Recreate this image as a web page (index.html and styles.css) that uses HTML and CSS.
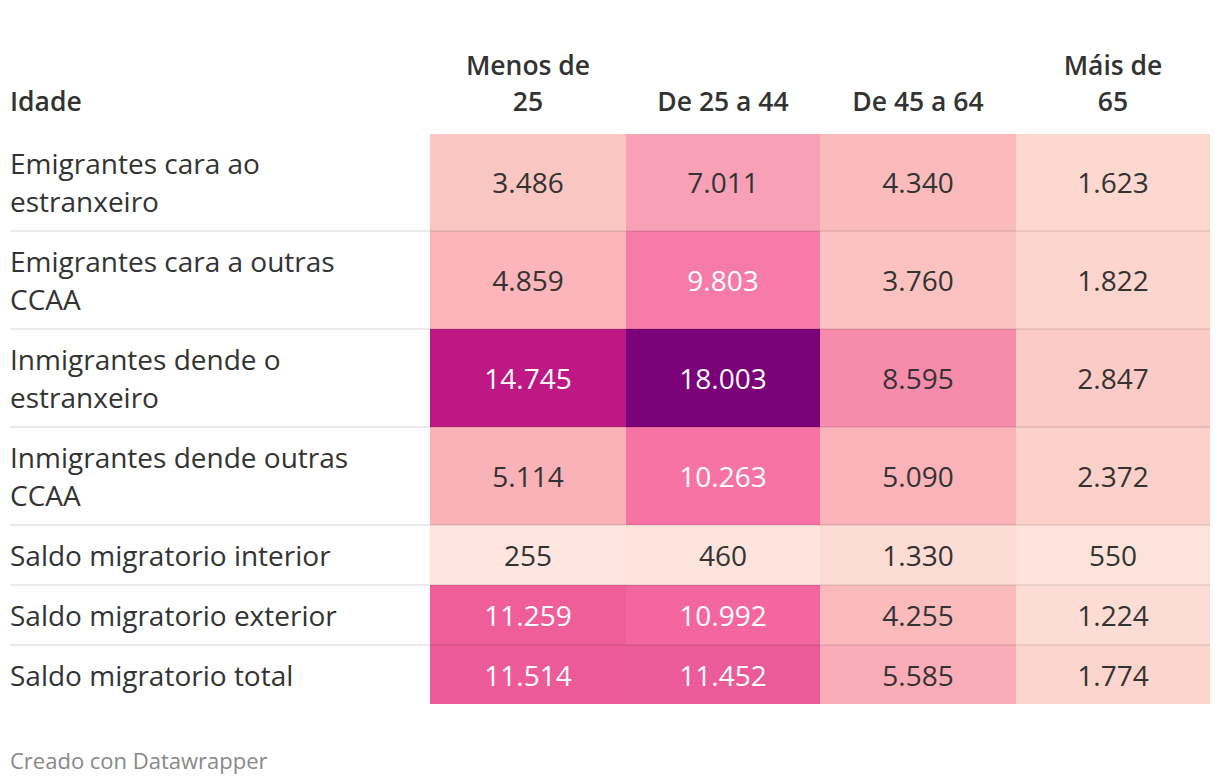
FILE: index.html
```html
<!DOCTYPE html>
<html lang="gl">
<head>
<meta charset="utf-8">
<title>Migracións por idade</title>
<link rel="stylesheet" href="styles.css">
</head>
<body>
<div class="chart">
  <table class="heat">
    <colgroup>
      <col class="c-label"><col class="c-a"><col class="c-b"><col class="c-a"><col class="c-b">
    </colgroup>
    <thead>
      <tr>
        <th class="h-label">Idade</th>
        <th class="h-num"><span>Menos de 25</span></th>
        <th class="h-num"><span>De 25 a 44</span></th>
        <th class="h-num"><span>De 45 a 64</span></th>
        <th class="h-num"><span class="narrow">Máis de 65</span></th>
      </tr>
    </thead>
    <tbody>
      <tr>
        <td class="label">Emigrantes cara ao estranxeiro</td>
        <td style="background:#fac6c2">3.486</td>
        <td style="background:#f8a1b6">7.011</td>
        <td style="background:#fbbbbd">4.340</td>
        <td style="background:#fdd8d1">1.623</td>
      </tr>
      <tr>
        <td class="label">Emigrantes cara a outras CCAA</td>
        <td style="background:#fbb5bb">4.859</td>
        <td class="dark" style="background:#f67ba8">9.803</td>
        <td style="background:#fbc2c1">3.760</td>
        <td style="background:#fdd5cf">1.822</td>
      </tr>
      <tr>
        <td class="label">Inmigrantes dende o estranxeiro</td>
        <td class="dark" style="background:#bd1883">14.745</td>
        <td class="dark" style="background:#7a0177">18.003</td>
        <td style="background:#f78bac">8.595</td>
        <td style="background:#fccbc7">2.847</td>
      </tr>
      <tr>
        <td class="label">Inmigrantes dende outras CCAA</td>
        <td style="background:#fab2b9">5.114</td>
        <td class="dark" style="background:#f673a4">10.263</td>
        <td style="background:#fab3b9">5.090</td>
        <td style="background:#fcd0cb">2.372</td>
      </tr>
      <tr>
        <td class="label">Saldo migratorio interior</td>
        <td style="background:#fee5df">255</td>
        <td style="background:#fee4dd">460</td>
        <td style="background:#fddcd5">1.330</td>
        <td style="background:#fee3dc">550</td>
      </tr>
      <tr>
        <td class="label">Saldo migratorio exterior</td>
        <td class="dark" style="background:#f05e9a">11.259</td>
        <td class="dark" style="background:#f4669f">10.992</td>
        <td style="background:#fbbabc">4.255</td>
        <td style="background:#fddcd5">1.224</td>
      </tr>
      <tr>
        <td class="label">Saldo migratorio total</td>
        <td class="dark" style="background:#ec5a98">11.514</td>
        <td class="dark" style="background:#ec5b99">11.452</td>
        <td style="background:#faacb8">5.585</td>
        <td style="background:#fdd5cf">1.774</td>
      </tr>
    </tbody>
  </table>
  <footer class="credit">Creado con Datawrapper</footer>
</div>
</body>
</html>
```

FILE: styles.css
```css
html, body {
  margin: 0;
  padding: 0;
  background: #ffffff;
}

body {
  font-family: "Open Sans", "Noto Sans", "Liberation Sans", sans-serif;
  color: #333333;
}

.chart {
  padding: 40px 10px 0 10px;
}

.heat {
  width: 1200px;
  border-collapse: collapse;
  table-layout: fixed;
  font-size: 28px;
}

.c-label { width: 420px; }
.c-a { width: 196px; }
.c-b { width: 194px; }

.heat th {
  font-size: 26.5px;
  font-weight: 600;
  line-height: 36px;
  vertical-align: bottom;
  padding: 7px 0 15px 0;
  color: #333333;
}

.h-label {
  text-align: left;
}

.h-num {
  text-align: center;
}

.h-num span {
  display: inline-block;
  max-width: 145px;
}

.h-num span.narrow {
  max-width: 115px;
}

.heat td {
  line-height: 38px;
  padding: 10px 10px;
  text-align: center;
  vertical-align: middle;
  border-bottom: 2px solid rgba(0, 0, 0, 0.075);
  color: #333333;
}

.heat tbody tr:last-child td {
  border-bottom: none;
}

.heat td.label {
  text-align: left;
  padding-left: 0;
  padding-right: 60px;
}

.heat td.dark {
  color: #ffffff;
}

.credit {
  margin-top: 41px;
  font-size: 22px;
  line-height: 30px;
  color: #888888;
}
```
